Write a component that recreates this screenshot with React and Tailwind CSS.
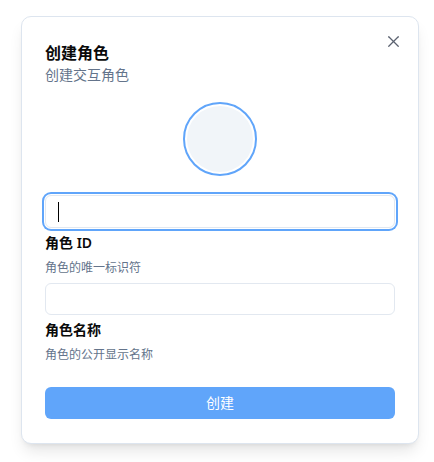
import { X } from 'lucide-react'

const font = { fontFamily: '"Noto Sans", "Noto Sans CJK SC", sans-serif' }

function Field({ label, hint, focused }) {
  return (
    <div>
      {focused ? (
        <div className="flex h-[33px] items-center rounded-md border border-[#e2e8f0] bg-white px-3 ring-2 ring-[#60a5fa] ring-offset-1">
          <span className="h-5 w-px bg-black" />
        </div>
      ) : (
        <div className="h-[32px] rounded-md border border-[#e2e8f0] bg-white" />
      )}
      <div className="mt-[5px] text-sm font-semibold leading-5 text-[#0a0a0a]">{label}</div>
      <div className="mt-[7px] text-xs leading-4 text-[#64748b]">{hint}</div>
    </div>
  )
}

export default function App() {
  return (
    <div className="min-h-screen bg-white pt-4 pl-[21px]" style={font}>
      <div className="relative w-[398px] rounded-[10px] border border-[#dde5ef] bg-white px-[23px] pt-6 pb-6 shadow-lg">
        <button className="absolute right-[15px] top-[15px] text-[#5b6270]">
          <X size={19} strokeWidth={1.6} />
        </button>

        <h2 className="text-base font-semibold leading-6 text-[#0a0a0a]">创建角色</h2>
        <p className="text-sm leading-5 text-[#64748b]">创建交互角色</p>

        <div className="mt-[17px] flex justify-center">
          <div className="h-[74px] w-[74px] rounded-full border-2 border-[#60a5fa] p-[2px]">
            <div className="h-full w-full rounded-full bg-[#f1f5f9]" />
          </div>
        </div>

        <div className="mt-[19px]">
          <Field label="角色 ID" hint="角色的唯一标识符" focused />
        </div>
        <div className="mt-[7px]">
          <Field label="角色名称" hint="角色的公开显示名称" />
        </div>

        <button className="mt-6 h-8 w-full rounded-md bg-[#60a5fa] text-sm text-white">创建</button>
      </div>
    </div>
  )
}
